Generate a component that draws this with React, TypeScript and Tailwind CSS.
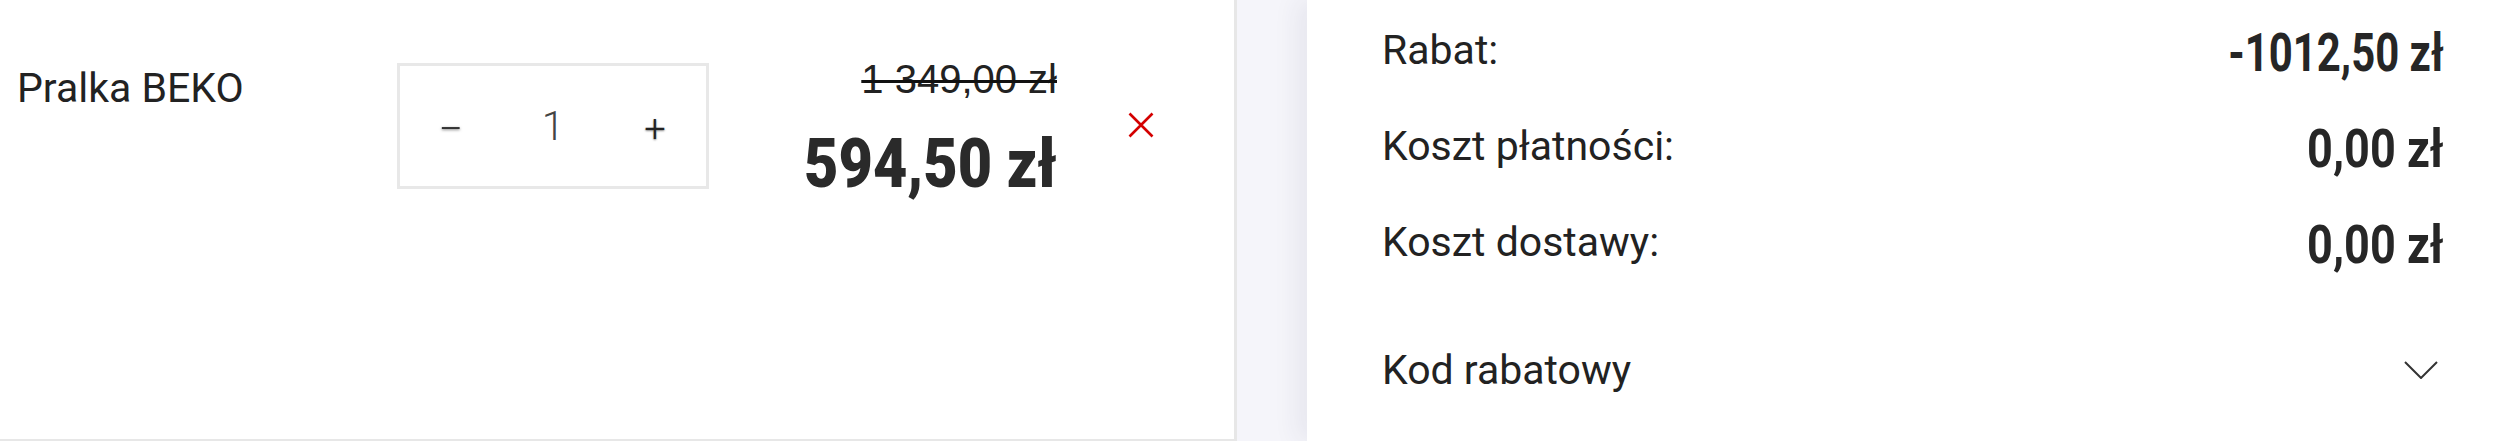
import React from "react";

const roboto = { fontFamily: "Roboto, 'Noto Sans', sans-serif" };

function Row({
  label,
  value,
  scale,
}: {
  label: string;
  value: string;
  scale: string;
}) {
  return (
    <div className="flex h-[96px] items-start justify-between">
      <span className="text-[41px] leading-[48px] text-[#222]">{label}</span>
      <span
        className={
          "mt-[1px] origin-right text-[53px] font-bold leading-[53px] text-[#262626] " +
          scale
        }
      >
        {value}
      </span>
    </div>
  );
}

export default function App() {
  return (
    <div
      className="flex h-[441px] w-[2502px] overflow-hidden bg-[#f5f5fa]"
      style={roboto}
    >
      {/* Left: cart item */}
      <div className="flex h-[441px] w-[1237px] shrink-0 items-start border-r-[3px] border-b-2 border-[#e7e7e7] bg-white">
        <div className="ml-[17px] mt-[64px] w-[380px] text-[41px] leading-[48px] text-[#222]">
          Pralka BEKO
        </div>
        <div className="mt-[63px] grid h-[126px] w-[312px] grid-cols-3 items-center border-[3px] border-[#e8e8e8] text-center">
          <button className="translate-y-[1px] scale-x-[2] text-[38px] font-light leading-none text-[#333] [text-shadow:0_1px_2px_rgba(0,0,0,0.5)]">
            -
          </button>
          <span className="text-[41px] font-light leading-none text-[#444]">1</span>
          <button className="translate-y-[3px] text-[38px] font-light leading-none text-[#222] [text-shadow:0_1px_2px_rgba(0,0,0,0.5)]">
            +
          </button>
        </div>
        <div className="flex w-[348px] flex-col items-end pt-[56px]">
          <span
            className="text-[40px] leading-[46px] text-[#222] line-through decoration-[#111] decoration-[3px]"
            style={{ fontFamily: "'Liberation Sans', Arial, sans-serif" }}
          >
            1 349,00 zł
          </span>
          <span className="mt-[27px] origin-right scale-x-[0.86] text-[69px] font-black leading-[69px] text-[#2a2a2a]">
            594,50 zł
          </span>
        </div>
        <button className="ml-[71px] mt-[112px] h-[26px] w-[26px]" aria-label="Usuń">
          <svg viewBox="0 0 26 26" width="26" height="26">
            <path d="M1.5 1.5 L24.5 24.5 M24.5 1.5 L1.5 24.5" stroke="#d40000" strokeWidth="2.6" fill="none" />
          </svg>
        </button>
      </div>

      {/* Right: summary card */}
      <div className="ml-[70px] flex-1 bg-white pl-[75px] pr-[58px] pt-[26px] shadow-[-10px_0_24px_rgba(40,40,80,0.07)]">
        <Row label="Rabat:" value="-1012,50 zł" scale="scale-x-[0.79]" />
        <Row label="Koszt płatności:" value="0,00 zł" scale="scale-x-[0.85]" />
        <Row label="Koszt dostawy:" value="0,00 zł" scale="scale-x-[0.85]" />
        <div className="mt-[32px] flex items-center justify-between">
          <span className="text-[41px] leading-[48px] text-[#222]">Kod rabatowy</span>
          <svg className="mr-[6px]" viewBox="0 0 34 18" width="34" height="18">
            <polyline points="1,1 17,17 33,1" stroke="#333" strokeWidth="2" fill="none" />
          </svg>
        </div>
      </div>
    </div>
  );
}
